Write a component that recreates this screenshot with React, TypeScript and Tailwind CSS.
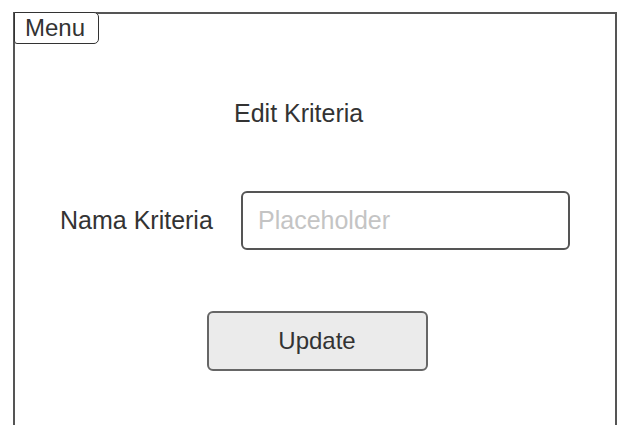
import React from "react";

const font = { fontFamily: '"Liberation Sans", Arial, sans-serif' };

export default function App() {
  return (
    <div className="h-[425px] w-[620px] overflow-hidden bg-white pl-[13px] pr-[3px] pt-[12px]" style={font}>
      {/* wireframe page, open at the bottom */}
      <div className="flex h-[440px] flex-col border-2 border-b-0 border-[#555]">
        <div className="-ml-[1px] -mt-[2px]">
          <button className="flex h-[32px] w-[85px] items-center rounded-br-[5px] rounded-tr-[5px] rounded-bl-[3px] border-[1.5px] border-[#333] bg-white pl-[10px] text-[24px] leading-none text-[#333]">
            Menu
          </button>
        </div>

        <h1 className="ml-[219px] mt-[57px] text-[25px] leading-none text-[#333]">Edit Kriteria</h1>

        <div className="mt-[65px] flex items-center">
          <label className="ml-[45px] w-[181px] text-[25px] leading-none text-[#333]">Nama Kriteria</label>
          <input
            placeholder="Placeholder"
            className="h-[59px] w-[329px] rounded-[6px] border-2 border-[#555] bg-white pl-[15px] text-[25px] text-[#333] outline-none placeholder:text-[#c4c4c4]"
          />
        </div>

        <div className="mt-[61px] flex justify-center pl-[4px]">
          <button className="h-[60px] w-[221px] rounded-[6px] border-2 border-[#666] bg-[#ebebeb] text-[24px] text-[#333]">
            Update
          </button>
        </div>
      </div>
    </div>
  );
}
